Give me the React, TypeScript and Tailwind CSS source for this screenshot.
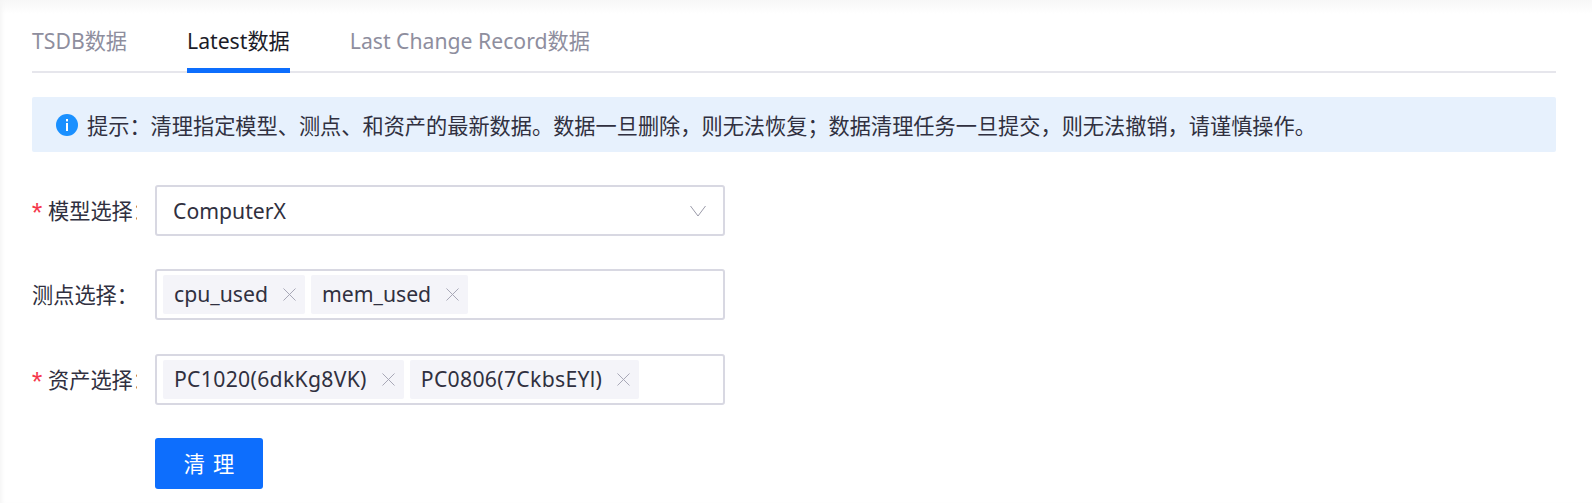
import React from "react";
import { X } from "lucide-react";

const font = "[font-family:'Noto_Sans','Noto_Sans_CJK_SC',sans-serif]";

const tabs = [
  { label: "TSDB数据", active: false },
  { label: "Latest数据", active: true },
  { label: "Last Change Record数据", active: false },
];

const Tag = ({ label, wide }: { label: string; wide?: boolean }) => (
  <span className={`flex h-[39px] items-center gap-[10px] rounded-[2px] bg-[#f4f4f9] pb-[2px] pl-[11px] pr-1 text-[#303040] ${wide ? "tracking-[0.3px]" : ""}`}>
    {label}
    <X size={23} strokeWidth={1} className="mt-[2px] text-[#a4a4b4]" />
  </span>
);

const Row = ({
  label,
  required,
  className,
  children,
}: {
  label: string;
  required?: boolean;
  className?: string;
  children: React.ReactNode;
}) => (
  <div className={`flex items-center ${className ?? ""}`}>
    <label className="flex w-[123px] items-center text-[#303040]">
      {required ? (
        <>
          <span className="-ml-[3px] mr-[3px] w-4 shrink-0 translate-y-[6px] text-[27px] leading-[30px] [font-family:'Liberation_Mono',monospace] text-[#f5364c]">*</span>
          {/* the colon is cut off by the narrow label on required rows */}
          <span className="w-[89px] shrink-0 overflow-hidden whitespace-nowrap">{label}</span>
        </>
      ) : (
        <span className="whitespace-nowrap">{label}</span>
      )}
    </label>
    <div className="flex h-[51px] w-[570px] items-center gap-[6px] rounded-[3px] border-2 border-[#d8d8e2] bg-white px-[6px]">
      {children}
    </div>
  </div>
);

export default function App() {
  return (
    <div className={`${font} h-[503px] w-[1592px] overflow-hidden bg-white bg-gradient-to-b from-[#f7f7f7] to-white to-[14px] pl-8 text-[21.2px] shadow-[inset_4px_0_4px_-2px_#f5f5f5]`}>
      <div className="w-[1524px]">
        <div className="flex h-[73px] gap-[60px] border-b-2 border-[#e6e6ec] pt-[22px]">
          {tabs.map((tab) => (
            <div
              key={tab.label}
              className={`h-[51px] leading-[38px] ${tab.active ? "border-b-[5px] border-[#0d6efd] text-[#1c1c28]" : "text-[#8e8e9e]"}`}
            >
              {tab.label}
            </div>
          ))}
        </div>

        <div className="mt-6 flex h-[55px] items-center gap-[9px] rounded-[2px] bg-[#e7f1fd] pl-6 text-[#303040]">
          <svg width="22" height="22" viewBox="0 0 22 22">
            <circle cx="11" cy="11" r="11" fill="#1a90ff" />
            <rect x="10" y="5" width="2" height="2.4" fill="#fff" />
            <rect x="10" y="9" width="2" height="8" fill="#fff" />
          </svg>
          <span className="mt-[2px]">提示：清理指定模型、测点、和资产的最新数据。数据一旦删除，则无法恢复；数据清理任务一旦提交，则无法撤销，请谨慎操作。</span>
        </div>

        <div className="mt-[33px] flex flex-col gap-[33px]">
          <Row label="模型选择：" required>
            <span className="flex-1 pl-[10px] text-[#303040]">ComputerX</span>
            <svg width="16" height="12" viewBox="0 0 16 12" fill="none" className="mr-[11px] text-[#9a9aa8]">
              <polyline points="0.5,1 8,11 15.5,1" stroke="currentColor" strokeWidth="1" />
            </svg>
          </Row>
          <Row label="测点选择：">
            <Tag label="cpu_used" />
            <Tag label="mem_used" />
          </Row>
          <Row label="资产选择：" required className="mt-px">
            <Tag label="PC1020(6dkKg8VK)" wide />
            <Tag label="PC0806(7CkbsEYl)" wide />
          </Row>
        </div>

        <button className="ml-[123px] mt-[33px] h-[51px] w-[108px] rounded-[3px] bg-[#0d6efd] pl-2 tracking-[8px] text-white">
          清理
        </button>
      </div>
    </div>
  );
}
